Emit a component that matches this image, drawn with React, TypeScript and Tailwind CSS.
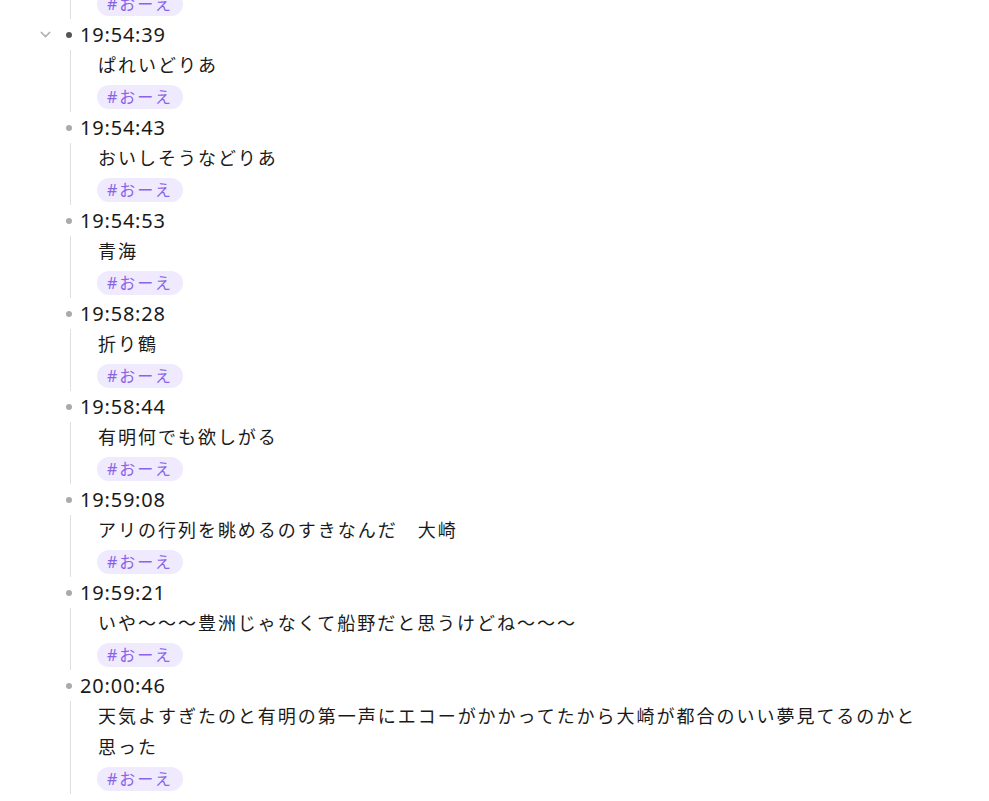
import React from "react";

type Item = { time: string; lines: string[] };

const items: Item[] = [
  { time: "19:54:39", lines: ["ぱれいどりあ"] },
  { time: "19:54:43", lines: ["おいしそうなどりあ"] },
  { time: "19:54:53", lines: ["青海"] },
  { time: "19:58:28", lines: ["折り鶴"] },
  { time: "19:58:44", lines: ["有明何でも欲しがる"] },
  { time: "19:59:08", lines: ["アリの行列を眺めるのすきなんだ　大崎"] },
  { time: "19:59:21", lines: ["いや〜〜〜豊洲じゃなくて船野だと思うけどね〜〜〜"] },
  {
    time: "20:00:46",
    lines: ["天気よすぎたのと有明の第一声にエコーがかかってたから大崎が都合のいい夢見てるのかと思った"],
  },
];

function Tag() {
  return (
    <div className="h-[31px] flex items-center">
      <span className="inline-flex items-center h-[24px] rounded-full bg-[#efeafe] text-[#8a63e8] text-[16px] tracking-[0.12em] pl-[10px] pr-[10px] -ml-px">
        #おーえ
      </span>
    </div>
  );
}

function Block({ item, first }: { item: Item; first: boolean }) {
  return (
    <div>
      <div className="h-[31px] flex items-center pl-[30px]">
        <div className="w-[30px] flex justify-center">
          {first && (
            <svg width="17" height="17" viewBox="0 0 24 24" fill="none" stroke="#b0b0b0" strokeWidth="2" strokeLinecap="round" strokeLinejoin="round">
              <path d="M6 9l6 6 6-6" />
            </svg>
          )}
        </div>
        <div className="w-[18px] flex justify-center">
          <span className={`block w-[6px] h-[6px] rounded-full ${first ? "bg-[#555]" : "bg-[#aaa]"}`} />
        </div>
        <span className="ml-[2px] text-[20px] text-[#1a1a1a] tracking-[0.04em]">{item.time}</span>
      </div>
      <div className="ml-[70px] border-l border-[#dedede] pl-[27px]">
        <div className="text-[18px] leading-[31px] text-[#1a1a1a] tracking-[0.11em] max-w-[830px]">
          {item.lines[0]}
        </div>
        <Tag />
      </div>
    </div>
  );
}

export default function App() {
  return (
    <div
      className="bg-white w-[989px] h-[801px] overflow-hidden"
      style={{ fontFamily: '"Noto Sans", "Noto Sans CJK JP", sans-serif' }}
    >
      <div className="-mt-[12px]">
        <div className="ml-[70px] border-l border-[#dedede] pl-[27px]">
          <Tag />
        </div>
        {items.map((it, i) => (
          <Block key={i} item={it} first={i === 0} />
        ))}
      </div>
    </div>
  );
}
